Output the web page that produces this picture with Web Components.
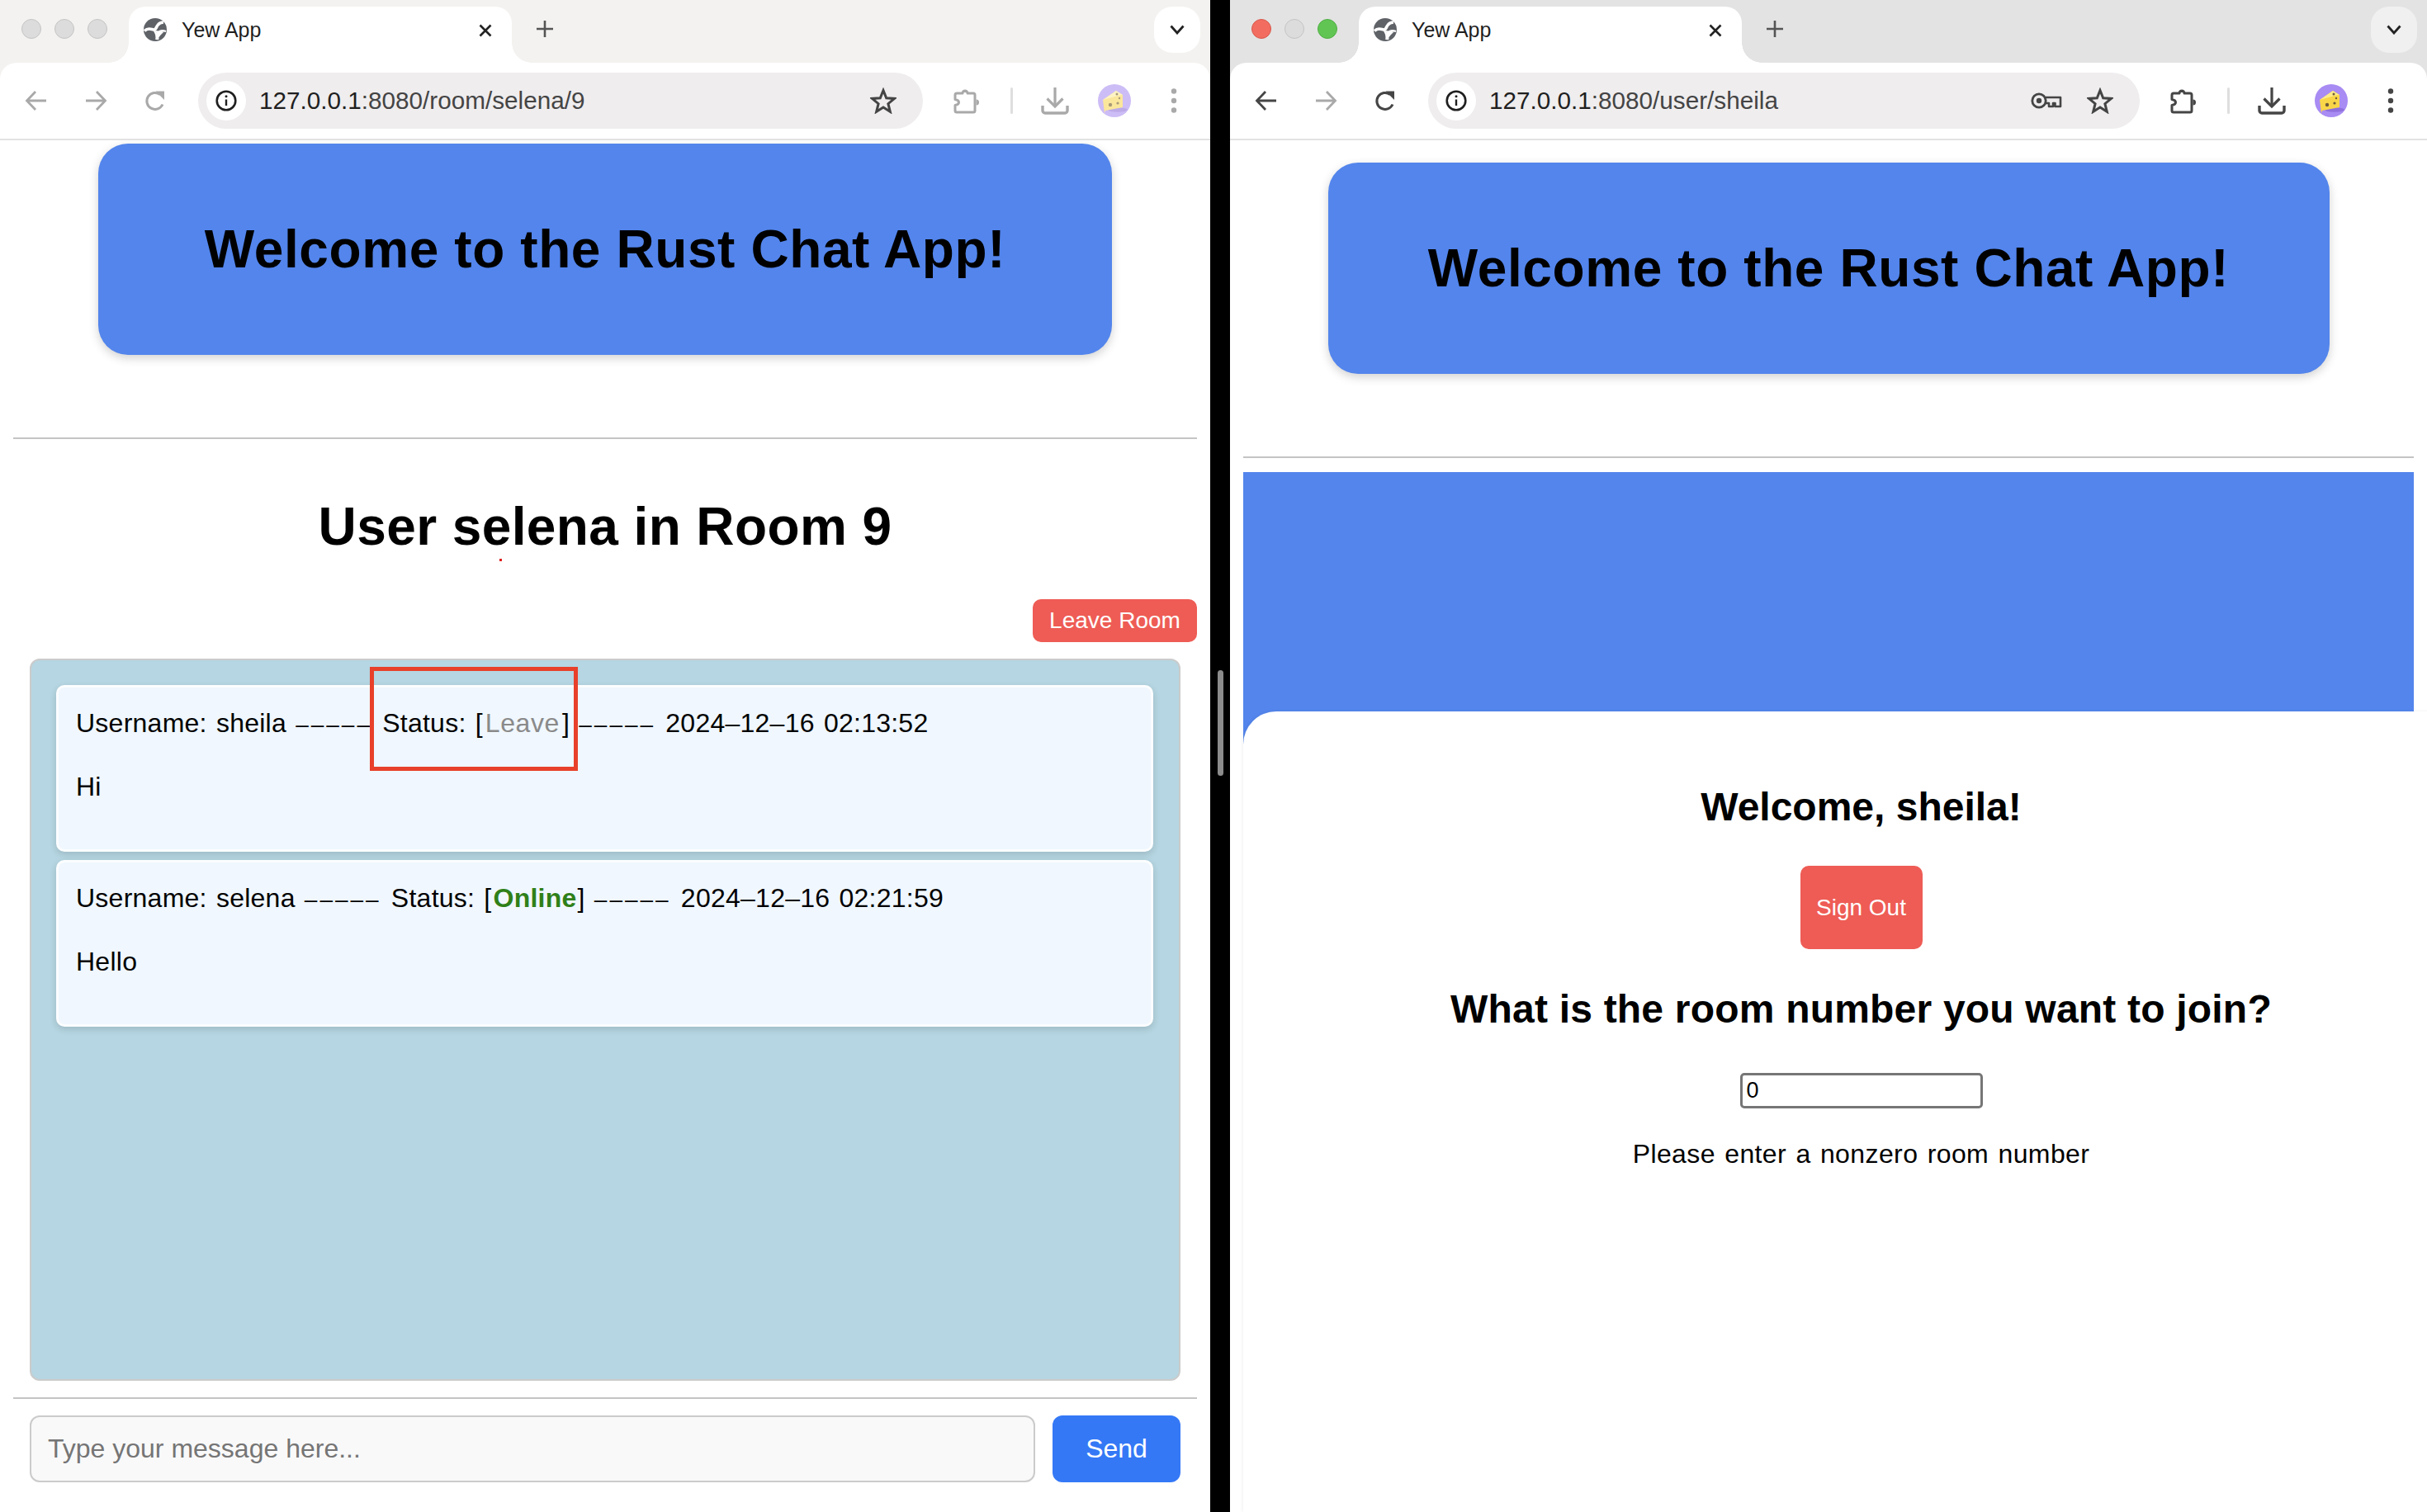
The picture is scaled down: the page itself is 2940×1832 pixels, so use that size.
<!DOCTYPE html>
<html>
<head>
<meta charset="utf-8">
<title>Yew App</title>
<style>
  html, body { margin: 0; padding: 0; background: #000; overflow: hidden; }
  body { width: 2940px; height: 1832px; display: flex; gap: 24px; font-family: "Liberation Sans", Arial, sans-serif; color: #000; position: relative; }
</style>
</head>
<body>
<browser-window url="127.0.0.1:8080/room/selena/9" style="width:1466px">
  <room-page user="selena" room="9">
    <chat-message user="sheila" status="Leave" time="2024–12–16 02:13:52">Hi</chat-message>
    <chat-message user="selena" status="Online" time="2024–12–16 02:21:59">Hello</chat-message>
  </room-page>
</browser-window>
<browser-window url="127.0.0.1:8080/user/sheila" active saved style="width:1450px">
  <lobby-page user="sheila"></lobby-page>
</browser-window>
<window-divider></window-divider>

<script>
const ICONS = {
  globe: `<svg width="28" height="28" viewBox="0 0 28 28"><circle cx="14" cy="14" r="14" fill="#5f6368"/><path d="M1 15.500c4-4.500 8-2 11-1.500 3 .4 3-3 5-5.500 1.500-2 4-3.500 7-3.500" stroke="#fff" stroke-width="3.600" fill="none"/><path d="M13 15c2 3.500 3 5 2.500 11M27 16c-4-1.500-7-1-9 1-1.500 1.500-1.500 5-.5 9" stroke="#fff" stroke-width="2.400" fill="none"/><path d="M14.500 15l10 1.500-4 4-3 4z" fill="#fff"/></svg>`,
  close: `<svg width="20" height="20" viewBox="0 0 20 20"><path d="M3.500 3.500l13 13M16.500 3.500l-13 13" stroke="#222" stroke-width="2.600" fill="none"/></svg>`,
  plus: `<svg width="22" height="22" viewBox="0 0 22 22"><path d="M11 1v20M1 11h20" stroke="#555" stroke-width="2.600" fill="none"/></svg>`,
  chevron: `<svg width="18" height="12" viewBox="0 0 18 12"><path d="M1.500 1.500L9 10l7.500-8.500" stroke="#222" stroke-width="2.800" fill="none"/></svg>`,
  back: `<svg width="28" height="28" viewBox="0 0 28 28"><path d="M26 14H3M13 3L2.500 14 13 25" stroke="currentColor" stroke-width="2.800" fill="none"/></svg>`,
  forward: `<svg width="28" height="28" viewBox="0 0 28 28"><path d="M2 14h23M15 3l10.500 11L15 25" stroke="#a9a9a9" stroke-width="2.800" fill="none"/></svg>`,
  reload: `<svg width="28" height="28" viewBox="0 0 28 28"><path d="M23 18.500A10 10 0 1 1 20 6.500" stroke="currentColor" stroke-width="3" fill="none"/><path d="M14.500 2.500h10.500v10.500z" fill="currentColor"/></svg>`,
  info: `<svg width="26" height="26" viewBox="0 0 26 26"><circle cx="13" cy="13" r="11.300" stroke="#1f1f1f" stroke-width="2.600" fill="none"/><path d="M13 11.500v7.500" stroke="#1f1f1f" stroke-width="2.400"/><circle cx="13" cy="7.800" r="1.500" fill="#1f1f1f"/></svg>`,
  key: `<svg width="38" height="22" viewBox="0 0 38 22"><circle cx="10" cy="11" r="8.200" stroke="#454545" stroke-width="2.800" fill="none"/><circle cx="10" cy="11" r="3.200" fill="#454545"/><path d="M18 7h18v11h-6.500v-4h-2.500v4h-5v-4h-5" stroke="#454545" stroke-width="2.600" fill="none" stroke-linejoin="round"/></svg>`,
  star: `<svg width="32" height="32" viewBox="0 0 32 32"><path d="M16 3.500l3.700 9.200 9.800.7-7.600 6.300 2.400 9.600-8.300-5.300-8.300 5.300 2.400-9.600-7.600-6.300 9.800-.7z" stroke="#444" stroke-width="3" fill="none" stroke-linejoin="miter"/></svg>`,
  puzzle: `<svg width="34" height="34" viewBox="0 0 34 34"><path d="M5 8h7a3 3 0 0 1 6 0h7a2 2 0 0 1 2 2v19a2 2 0 0 1-2 2H5a2 2 0 0 1-2-2v-6.500c3-.5 4.500-2 4.500-3.500S6 16 3 15.500V10a2 2 0 0 1 2-2z" stroke="currentColor" stroke-width="3" fill="none" stroke-linejoin="round"/><path d="M28.500 15.500a3.500 3.500 0 0 1 0 7z" fill="currentColor"/><path d="M12 7a3 3 0 0 1 6 0z" fill="currentColor"/></svg>`,
  download: `<svg width="34" height="34" viewBox="0 0 34 34"><path d="M17 1v22" stroke="currentColor" stroke-width="3.200"/><path d="M7.500 14.500L17 24l9.500-9.500" stroke="currentColor" stroke-width="3.200" fill="none"/><path d="M2 23v6a3 3 0 0 0 3 3h24a3 3 0 0 0 3-3v-6" stroke="currentColor" stroke-width="3.400" fill="none"/></svg>`,
  dots: `<svg width="8" height="32" viewBox="0 0 8 32"><circle cx="4" cy="4.500" r="3.200" fill="currentColor"/><circle cx="4" cy="16" r="3.200" fill="currentColor"/><circle cx="4" cy="27.500" r="3.200" fill="currentColor"/></svg>`,
};

function cheese(active) {
  const bg = active ? "#a88bf3" : "#cdbdf6";
  const shade = active ? "#8f70dd" : "#bcaae8";
  const top = active ? "#fdeb8a" : "#fdf3c4";
  const face = active ? "#f9d648" : "#fbe79c";
  const hole = active ? "#6e5a3a" : "#a89a78";
  return `<svg width="40" height="40" viewBox="0 0 40 40"><circle cx="20" cy="20" r="20" fill="${bg}"/><ellipse cx="24" cy="31" rx="12" ry="2.800" fill="${shade}"/><path d="M6 19L22 8l8 5v15L9 32l-1 3z" fill="${face}"/><path d="M6 19L22 8l8 5-4 .5z" fill="${top}"/><circle cx="23" cy="12" r="1.500" fill="${hole}"/><circle cx="15" cy="25" r="2.200" fill="${hole}"/><circle cx="24" cy="23" r="1.600" fill="${hole}"/><circle cx="26" cy="17" r="1.200" fill="${hole}"/></svg>`;
}

class BrowserWindow extends HTMLElement {
  connectedCallback() {
    const active = this.hasAttribute("active");
    const root = this.attachShadow({ mode: "open" });
    root.innerHTML = `
      <style>
        :host { display: flex; flex-direction: column; height: 1832px; flex: none; overflow: hidden; font-family: "Liberation Sans", Arial, sans-serif;
          --strip: ${active ? "#e3e3e3" : "#f3f2f0"}; --ico: ${active ? "#454545" : "#a9a9a9"}; background: #fff; }
        .strip { height: 76px; flex: none; box-sizing: border-box; padding-top: 8px; background: var(--strip); display: flex; align-items: flex-start; }
        .lights { display: flex; gap: 16px; padding: 15px 0 0 26px; }
        .lights i { width: 24px; height: 24px; border-radius: 50%; box-sizing: border-box; background: #dcdcdc; border: 1px solid #c4c4c4; }
        .lights.on i:nth-child(1) { background: #f26d60; border-color: #d8574b; }
        .lights.on i:nth-child(3) { background: #61c554; border-color: #4fae43; }
        .tab { position: relative; width: 464px; height: 68px; margin-left: 26px; flex: none; background: #fff; border-radius: 20px 20px 0 0; display: flex; align-items: flex-start; box-sizing: border-box; padding: 14px 22px 0 18px; }
        .tab::before, .tab::after { content: ""; position: absolute; bottom: 0; width: 24px; height: 24px; }
        .tab::before { left: -24px; background: radial-gradient(circle at 0 0, var(--strip) 23.500px, #fff 24px); }
        .tab::after { right: -24px; background: radial-gradient(circle at 100% 0, var(--strip) 23.500px, #fff 24px); }
        .title { margin-left: 18px; font-size: 25px; line-height: 28px; color: #1f1f1f; flex: 1; }
        .close { margin-top: 5px; margin-right: 0; line-height: 0; }
        .plus { margin: 16px 0 0 29px; line-height: 0; }
        .chev { margin-left: auto; margin-right: 12px; width: 56px; height: 56px; border-radius: 22px; background: ${active ? "#f0f0f0" : "#fff"}; display: flex; align-items: center; justify-content: center; }
        .bar { height: 94px; flex: none; box-sizing: border-box; background: var(--strip); }
        .bar-in { height: 94px; box-sizing: border-box; background: #fff; border-radius: 20px 20px 0 0; border-bottom: 2px solid #e2e2e2; display: flex; align-items: center; padding: 0 8px; color: var(--ico); }
        .btn { width: 72px; height: 72px; flex: none; display: flex; align-items: center; justify-content: center; }
        .omni { flex: 1; height: 68px; margin-left: 16px; border-radius: 34px; background: #efedee; display: flex; align-items: center; padding: 0 10px; }
        .omni .site { width: 48px; height: 48px; border-radius: 50%; background: #fff; display: flex; align-items: center; justify-content: center; flex: none; }
        .url { margin-left: 16px; font-size: 29.700px; color: #1f1f1f; flex: 1; }
        .url span { color: #444; }
        .omni svg { display: block; }
        .key { margin-right: 30px; line-height: 0; }
        .star { margin-right: 22px; line-height: 0; }
        .sep { width: 3px; height: 32px; margin: 0 15px 0 17px; background: #dedede; border-radius: 2px; flex: none; }
        .first { margin-left: 17px; }
        .view { flex: 1; min-height: 0; overflow: hidden; }
      </style>
      <div class="strip">
        <div class="lights ${active ? "on" : ""}"><i></i><i></i><i></i></div>
        <div class="tab">${ICONS.globe}<span class="title">Yew App</span><span class="close">${ICONS.close}</span></div>
        <span class="plus">${ICONS.plus}</span>
        <div class="chev">${ICONS.chevron}</div>
      </div>
      <div class="bar"><div class="bar-in">
        <span class="btn">${ICONS.back}</span>
        <span class="btn">${ICONS.forward}</span>
        <span class="btn">${ICONS.reload}</span>
        <div class="omni">
          <span class="site">${ICONS.info}</span>
          <span class="url"></span>
          ${this.hasAttribute("saved") ? `<span class="key">${ICONS.key}</span>` : ""}
          <span class="star">${ICONS.star}</span>
        </div>
        <span class="btn first">${ICONS.puzzle}</span>
        <span class="sep"></span>
        <span class="btn">${ICONS.download}</span>
        <span class="btn">${cheese(active)}</span>
        <span class="btn">${ICONS.dots}</span>
      </div></div>
      <div class="view"><slot></slot></div>`;
    const url = this.getAttribute("url");
    const cut = url.indexOf(":");
    root.querySelector(".url").innerHTML = `${url.slice(0, cut)}<span>${url.slice(cut)}</span>`;
  }
}

class WelcomeBanner extends HTMLElement {
  constructor() {
    super();
    this.attachShadow({ mode: "open" }).innerHTML = `
      <style>
        :host { display: flex; align-items: center; justify-content: center; width: var(--banner-w, 1228px); height: 256px; flex: none; box-sizing: border-box;
          background: #5385ec; border-radius: 36px; box-shadow: 0 4px 12px rgba(0,0,0,.18); align-self: center; }
        h1 { margin: 0; font-size: 64px; line-height: 74px; font-weight: bold; color: #000; letter-spacing: .6px; }
      </style>
      <h1>Welcome to the Rust Chat App!</h1>`;
  }
}

class PageRule extends HTMLElement {
  constructor() {
    super();
    this.attachShadow({ mode: "open" }).innerHTML = `
      <style>:host { display: block; height: 2px; flex: none; background: #c4c4c4; }</style>`;
  }
}

class ActionButton extends HTMLElement {
  constructor() {
    super();
    this.attachShadow({ mode: "open" }).innerHTML = `
      <style>
        :host { display: inline-flex; align-items: center; justify-content: center; box-sizing: border-box; flex: none; background: #ee5c55; color: #fff; border-radius: 10px; font-size: 28px; }
        :host([blue]) { background: #3478f6; border-radius: 12px; font-size: 32px; }
      </style>
      <slot></slot>`;
  }
}

class ChatMessage extends HTMLElement {
  connectedCallback() {
    const status = this.getAttribute("status");
    const dash = `<span class="dash">–––––</span>`;
    this.attachShadow({ mode: "open" }).innerHTML = `
      <style>
        :host { display: block; box-sizing: border-box; height: 202px; padding: 25px 21px 0 21px; background: #f0f7fe; border: 3px solid #fbfdff; border-radius: 10px; box-shadow: 0 3px 8px rgba(0,0,0,.14); font-size: 32px; letter-spacing: .25px; word-spacing: 2px; }
        p { margin: 0; line-height: 36px; white-space: pre; color: #000; }
        .body { margin-top: 39px; }
        .dash { font-size: 28px; letter-spacing: 3px; margin-right: 1px; }
        .Leave { color: #8a8a8a; letter-spacing: .6px; margin: 0 3px; }
        .Online { color: #2f8018; font-weight: bold; margin: 0 1px 0 2px; }
      </style>
      <p>Username: ${this.getAttribute("user")} ${dash} Status: [<span class="${status}">${status}</span>] ${dash} ${this.getAttribute("time")}</p>
      <p class="body"><slot></slot></p>`;
  }
}

class RoomPage extends HTMLElement {
  connectedCallback() {
    this.attachShadow({ mode: "open" }).innerHTML = `
      <style>
        :host { display: flex; flex-direction: column; padding: 4px 16px 0; box-sizing: border-box; position: relative; }
        page-rule { margin-top: 100px; }
        h2 { margin: 69px 0 0; font-size: 64px; line-height: 74px; font-weight: bold; text-align: center; letter-spacing: .4px; }
        .tools { display: flex; justify-content: flex-end; margin-top: 51px; }
        action-button.leave { width: 199px; height: 52px; }
        .panel { position: relative; margin: 20px 20px 0; height: 875px; box-sizing: border-box; padding: 30px 31px 0 30px; background: #b5d6e2; border: 2px solid #cbcbcb; border-radius: 12px; display: flex; flex-direction: column; gap: 10px; }
        .mark { position: absolute; left: 410px; top: 8px; width: 252px; height: 126px; box-sizing: border-box; border: 5px solid #e8402a; }
        .dot { position: absolute; left: 605px; top: 507px; width: 3px; height: 3px; background: #e02020; }
        .foot { margin-top: 20px; }
        .send { display: flex; gap: 21px; margin: 20px 20px 0 20px; }
        .send input { flex: 1; min-width: 0; height: 81px; box-sizing: border-box; padding: 0 20px; font: 32px "Liberation Sans", Arial, sans-serif; background: #f9f9f9; border: 2px solid #cbcbcb; border-radius: 12px; outline: none; }
        .send input::placeholder { color: #757575; }
        action-button.go { width: 155px; height: 81px; }
      </style>
      <welcome-banner></welcome-banner>
      <page-rule></page-rule>
      <h2>User ${this.getAttribute("user")} in Room ${this.getAttribute("room")}</h2>
      <span class="dot"></span>
      <div class="tools"><action-button class="leave">Leave Room</action-button></div>
      <div class="panel"><slot></slot><span class="mark"></span></div>
      <page-rule class="foot"></page-rule>
      <div class="send"><input placeholder="Type your message here..."><action-button class="go" blue>Send</action-button></div>`;
  }
}

class LobbyPage extends HTMLElement {
  connectedCallback() {
    this.attachShadow({ mode: "open" }).innerHTML = `
      <style>
        :host { display: flex; flex-direction: column; padding: 27px 16px 0; box-sizing: border-box; --banner-w: 1213px; }
        page-rule { margin-top: 100px; }
        .band { height: 330px; margin-top: 17px; background: #5385ec; flex: none; }
        .card { width: 1496px; height: 970px; margin-top: -40px; flex: none; background: #fff; border-radius: 40px 0 0 0; box-shadow: -1px 0 4px rgba(0,0,0,.06); display: flex; flex-direction: column; align-items: center; box-sizing: border-box; padding: 88px 0 0 1px; }
        h3 { margin: 0; font-size: 48px; line-height: 56px; font-weight: bold; }
        action-button { width: 148px; height: 101px; margin-top: 43px; }
        h3.ask { margin-top: 45px; letter-spacing: .2px; }
        input { width: 294px; height: 43px; margin-top: 49px; box-sizing: border-box; padding: 0 5px; font: 27px "Liberation Sans", Arial, sans-serif; color: #000; background: #fff; border: 3px solid #767676; border-radius: 5px; outline: none; }
        p { margin: 37px 0 0; font-size: 32px; line-height: 36px; letter-spacing: .4px; word-spacing: 2px; }
      </style>
      <welcome-banner></welcome-banner>
      <page-rule></page-rule>
      <div class="band"></div>
      <div class="card">
        <h3>Welcome, ${this.getAttribute("user")}!</h3>
        <action-button>Sign Out</action-button>
        <h3 class="ask">What is the room number you want to join?</h3>
        <input type="number" value="0">
        <p>Please enter a nonzero room number</p>
      </div>`;
  }
}

class WindowDivider extends HTMLElement {
  constructor() {
    super();
    this.attachShadow({ mode: "open" }).innerHTML = `
      <style>:host { display: block; position: absolute; left: 1475px; top: 812px; width: 7px; height: 128px; border-radius: 4px; background: #8c8c8c; }</style>`;
  }
}

customElements.define("browser-window", BrowserWindow);
customElements.define("welcome-banner", WelcomeBanner);
customElements.define("page-rule", PageRule);
customElements.define("action-button", ActionButton);
customElements.define("chat-message", ChatMessage);
customElements.define("room-page", RoomPage);
customElements.define("lobby-page", LobbyPage);
customElements.define("window-divider", WindowDivider);
</script>
</body>
</html>
